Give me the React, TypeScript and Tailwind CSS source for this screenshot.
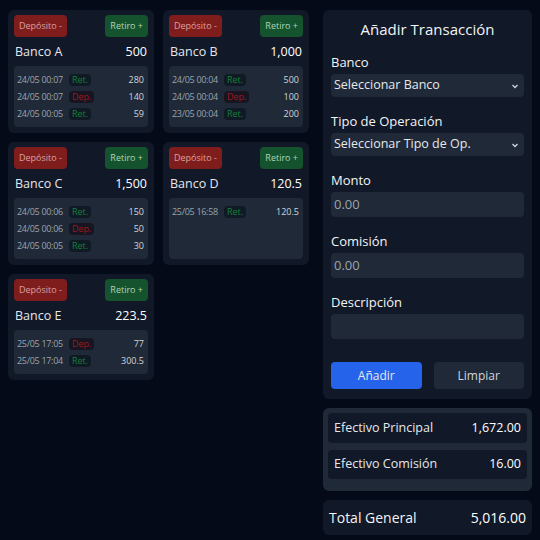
import React from "react";

type Tx = { time: string; kind: "Ret." | "Dep."; amount: string };
type Bank = { name: string; balance: string; txs: Tx[] };

const banks: Bank[] = [
  {
    name: "Banco A",
    balance: "500",
    txs: [
      { time: "24/05 00:07", kind: "Ret.", amount: "280" },
      { time: "24/05 00:07", kind: "Dep.", amount: "140" },
      { time: "24/05 00:05", kind: "Ret.", amount: "59" },
    ],
  },
  {
    name: "Banco B",
    balance: "1,000",
    txs: [
      { time: "24/05 00:04", kind: "Ret.", amount: "500" },
      { time: "24/05 00:04", kind: "Dep.", amount: "100" },
      { time: "23/05 00:04", kind: "Ret.", amount: "200" },
    ],
  },
  {
    name: "Banco C",
    balance: "1,500",
    txs: [
      { time: "24/05 00:06", kind: "Ret.", amount: "150" },
      { time: "24/05 00:06", kind: "Dep.", amount: "50" },
      { time: "24/05 00:05", kind: "Ret.", amount: "30" },
    ],
  },
  {
    name: "Banco D",
    balance: "120.5",
    txs: [{ time: "25/05 16:58", kind: "Ret.", amount: "120.5" }],
  },
  {
    name: "Banco E",
    balance: "223.5",
    txs: [
      { time: "25/05 17:05", kind: "Dep.", amount: "77" },
      { time: "25/05 17:04", kind: "Ret.", amount: "300.5" },
    ],
  },
];

function BankCard({ bank }: { bank: Bank }) {
  return (
    <div className="bg-[#111827] rounded-md p-[6px] pt-[5px] pb-[6px] flex flex-col">
      <div className="flex justify-between">
        <button className="bg-[#7f1d1d] text-[#dca0a0] text-[9px] h-[22px] px-[5px] rounded">
          Depósito -
        </button>
        <button className="bg-[#14532d] text-[#b0d6ba] text-[9px] h-[22px] px-[5px] rounded">
          Retiro +
        </button>
      </div>
      <div className="flex justify-between items-center h-[18px] mt-[6px] mb-[5px] px-px text-[12.5px] text-[#e5e7eb]">
        <span>{bank.name}</span>
        <span className="font-medium text-white">{bank.balance}</span>
      </div>
      <div className="bg-[#1f2937] rounded flex-1 px-[3px] pt-[5px] pb-[5px]">
        {bank.txs.map((t, i) => (
          <div key={i} className="flex items-center h-[17px] text-[9px]">
            <span className="text-[#9ca3af] w-[52px] tracking-[-0.3px]">{t.time}</span>
            <span
              className={
                t.kind === "Ret."
                  ? "bg-[#0f1a24] text-[#15803d] rounded px-[3px] leading-[12px]"
                  : "bg-[#171522] text-[#991b1b] rounded px-[3px] leading-[12px]"
              }
            >
              {t.kind}
            </span>
            <span className="ml-auto text-[#d1d5db] pr-[1px]">{t.amount}</span>
          </div>
        ))}
      </div>
    </div>
  );
}

function Field({ label, children }: { label: string; children: React.ReactNode }) {
  return (
    <div>
      <div className="text-[13px] leading-[16px] text-[#f3f4f6] mb-[4px]">{label}</div>
      {children}
    </div>
  );
}

function Select({ text }: { text: string }) {
  return (
    <div className="bg-[#1f2937] rounded h-[23px] flex items-center justify-between px-[3px] text-[12.5px] text-[#e5e7eb]">
      <span>{text}</span>
      <svg width="10" height="10" viewBox="0 0 10 10" className="mr-[1px]">
        <path d="M2.5 4 L5 6.5 L7.5 4" stroke="#d1d5db" strokeWidth="1.3" fill="none" />
      </svg>
    </div>
  );
}

function Input({ placeholder }: { placeholder?: string }) {
  return (
    <div className="bg-[#1f2937] rounded h-[25px] flex items-center px-[3px] text-[13px] text-[#9ca3af]">
      {placeholder}
    </div>
  );
}

export default function App() {
  return (
    <div
      className="w-[540px] h-[540px] bg-[#050a18] flex gap-[14px] pl-[8px] pr-[8px] pt-[10px]"
      style={{ fontFamily: '"Open Sans", sans-serif' }}
    >
      <div className="w-[301px] grid grid-cols-2 gap-[9px] content-start">
        {banks.map((b) => (
          <BankCard key={b.name} bank={b} />
        ))}
      </div>

      <div className="flex-1 flex flex-col gap-[9px]">
        <div className="bg-[#111827] rounded-md px-[8px] pt-[9px] pb-[10px]">
          <div className="text-center text-[15px] leading-[20px] text-[#f3f4f6] mb-[15px]">Añadir Transacción</div>
          <div className="flex flex-col gap-[16px]">
            <Field label="Banco">
              <Select text="Seleccionar Banco" />
            </Field>
            <Field label="Tipo de Operación">
              <Select text="Seleccionar Tipo de Op." />
            </Field>
            <Field label="Monto">
              <Input placeholder="0.00" />
            </Field>
            <Field label="Comisión">
              <Input placeholder="0.00" />
            </Field>
            <Field label="Descripción">
              <Input />
            </Field>
          </div>
          <div className="flex gap-[12px] mt-[23px]">
            <button className="flex-1 h-[27px] rounded bg-[#2563eb] text-[12px] text-[#e5e7eb]">Añadir</button>
            <button className="flex-1 h-[27px] rounded bg-[#1f2937] text-[12px] text-[#d1d5db]">Limpiar</button>
          </div>
        </div>

        <div className="bg-[#1f2937] rounded-md p-[5px] pb-[12px] flex flex-col gap-[7px]">
          <div className="bg-[#111827] rounded h-[30px] flex items-center justify-between px-[6px] text-[12.5px] text-[#e5e7eb]">
            <span>Efectivo Principal</span>
            <span className="text-white">1,672.00</span>
          </div>
          <div className="bg-[#111827] rounded h-[29px] flex items-center justify-between px-[6px] text-[12.5px] text-[#e5e7eb]">
            <span>Efectivo Comisión</span>
            <span className="text-white">16.00</span>
          </div>
        </div>

        <div className="bg-[#111827] rounded-md h-[35px] flex items-center justify-between px-[6px] text-[14px] text-[#f3f4f6]">
          <span>Total General</span>
          <span className="text-white">5,016.00</span>
        </div>
      </div>
    </div>
  );
}
